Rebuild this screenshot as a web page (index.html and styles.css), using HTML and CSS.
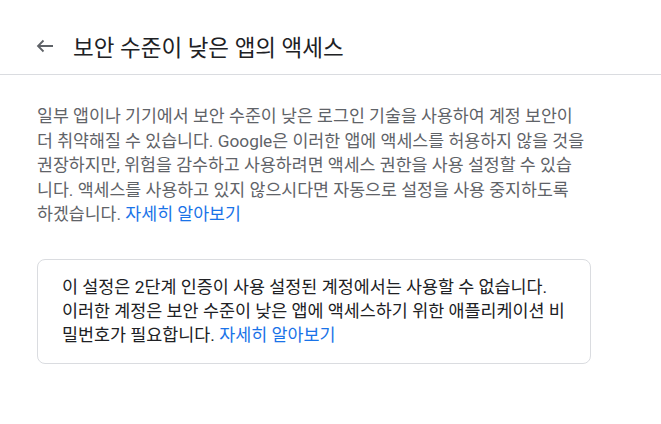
FILE: index.html
```html
<!DOCTYPE html>
<html lang="ko">
<head>
  <meta charset="utf-8">
  <title>보안 수준이 낮은 앱의 액세스</title>
  <link rel="stylesheet" href="styles.css">
</head>
<body>
  <header class="top-bar">
    <a class="back" href="#" aria-label="뒤로">
      <svg width="18" height="14" viewBox="0 0 18 14">
        <path d="M17 7H2M7.5 1.5L2 7l5.5 5.5" fill="none" stroke="#5f6368" stroke-width="1.8"/>
      </svg>
    </a>
    <h1>보안 수준이 낮은 앱의 액세스</h1>
  </header>

  <main class="content">
    <p class="intro">
      일부 앱이나 기기에서 보안 수준이 낮은 로그인 기술을 사용하여 계정 보안이<br>
      더 취약해질 수 있습니다. Google은 이러한 앱에 액세스를 허용하지 않을 것을<br>
      권장하지만, 위험을 감수하고 사용하려면 액세스 권한을 사용 설정할 수 있습<br>니다. 액세스를 사용하고 있지 않으시다면 자동으로 설정을 사용 중지하도록<br>
      하겠습니다. <a href="#">자세히 알아보기</a>
    </p>

    <div class="notice">
      이 설정은 2단계 인증이 사용 설정된 계정에서는 사용할 수 없습니다.<br>
      이러한 계정은 보안 수준이 낮은 앱에 액세스하기 위한 애플리케이션 비<br>밀번호가 필요합니다. <a href="#">자세히 알아보기</a>
    </div>
  </main>
</body>
</html>
```

FILE: styles.css
```css
body {
  margin: 0;
  background-color: #ffffff;
  font-family: Roboto, "Noto Sans CJK KR", sans-serif;
  color: #202124;
}

a {
  color: #1a73e8;
  text-decoration: none;
}

.top-bar {
  display: flex;
  align-items: center;
  height: 36px;
  padding: 28px 36px 10px;
  border-bottom: 1px solid #dadce0;
}

.back {
  display: flex;
  margin-right: 19px;
}

.top-bar h1 {
  margin: 0;
  font-size: 22.5px;
  font-weight: 400;
  color: #202124;
}

.content {
  padding: 0 37px;
}

.intro {
  width: 575px;
  margin: 29px 0 32px;
  font-size: 17.3px;
  line-height: 24.5px;
  color: #5f6368;
}

.notice {
  box-sizing: border-box;
  width: 554px;
  padding: 15px 8px 16px 24px;
  border: 1px solid #dadce0;
  border-radius: 8px;
  font-size: 17.4px;
  line-height: 24px;
  color: #202124;
}
```
